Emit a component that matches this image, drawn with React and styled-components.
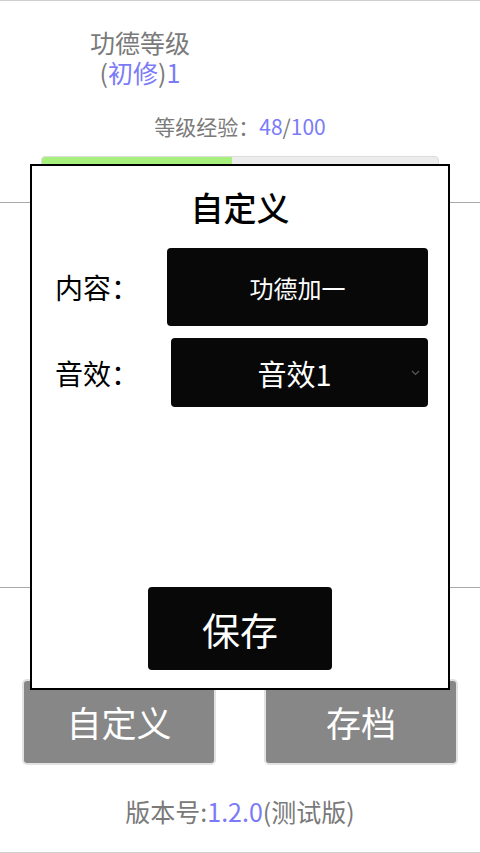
import React from "react";
import styled, { createGlobalStyle } from "styled-components";

const Global = createGlobalStyle`
  html, body { margin: 0; padding: 0; background: #fff; }
  body { font-family: "Noto Sans CJK SC", "Noto Sans", sans-serif; }
  * { box-sizing: border-box; }
`;

const Page = styled.div`
  position: relative;
  width: 480px;
  height: 853px;
  border-top: 1px solid #cfcfcf;
  border-bottom: 1px solid #cfcfcf;
  display: flex;
  flex-direction: column;
  overflow: hidden;
`;

const LevelBlock = styled.div`
  width: 280px;
  padding-top: 26px;
  text-align: center;
  font-size: 25px;
  line-height: 30px;
  color: #7a7a7a;
`;

const Blue = styled.span`
  color: #7b7bf7;
`;

const ExpLine = styled.div`
  margin-top: 27px;
  text-align: center;
  font-size: 21px;
  line-height: 24px;
  color: #7a7a7a;
`;

const Bar = styled.div`
  margin: 18px 41px 0;
  height: 20px;
  border: 1px solid #dcdcdc;
  border-radius: 4px;
  background: #ececec;
  overflow: hidden;
`;

const BarFill = styled.div`
  height: 100%;
  background: #a8f07e;
`;

const Stage = styled.div`
  margin-top: 26px;
  height: 386px;
  border-top: 1px solid #a9a9a9;
  border-bottom: 1px solid #a9a9a9;
`;

const ButtonRow = styled.div`
  margin-top: 91px;
  padding: 0 22px;
  display: flex;
  justify-content: space-between;
`;

const GrayButton = styled.div`
  width: 194px;
  height: 86px;
  background: #878787;
  border: 2px solid #e2e2e2;
  border-radius: 5px;
  color: #fff;
  font-size: 35px;
  line-height: 1;
  display: flex;
  align-items: center;
  justify-content: center;
  padding-bottom: 2px;
`;

const Version = styled.div`
  margin-top: 30px;
  text-align: center;
  font-size: 25px;
  line-height: 32px;
  color: #7a7a7a;
`;

const Modal = styled.div`
  position: absolute;
  left: 30px;
  top: 163px;
  width: 420px;
  height: 526px;
  background: #fff;
  border: 2px solid #000;
  display: flex;
  flex-direction: column;
`;

const ModalTitle = styled.div`
  margin-top: 21px;
  text-align: center;
  font-size: 33px;
  line-height: 40px;
  font-weight: 500;
  color: #000;
`;

const FieldRow = styled.div`
  display: flex;
  align-items: center;
  margin-top: ${(p) => p.$gap}px;
  padding: 0 20px 0 23px;
`;

const Label = styled.div`
  width: 112px;
  flex: none;
  font-size: 28px;
  color: #000;
`;

const Field = styled.div`
  position: relative;
  flex: 1;
  height: ${(p) => p.$h}px;
  margin-left: ${(p) => p.$offset || 0}px;
  background: #080808;
  border-radius: 4px;
  color: #fff;
  font-size: ${(p) => p.$size}px;
  display: flex;
  align-items: center;
  justify-content: center;
  padding-right: ${(p) => p.$pr || 0}px;
`;

const Chevron = styled.svg`
  position: absolute;
  right: 8px;
  top: 50%;
  margin-top: -3px;
`;

const Spacer = styled.div`
  flex: 1;
`;

const SaveButton = styled.div`
  align-self: center;
  margin-bottom: 18px;
  width: 184px;
  height: 83px;
  background: #080808;
  border-radius: 4px;
  color: #fff;
  font-size: 38px;
  display: flex;
  align-items: center;
  justify-content: center;
`;

export default function App() {
  const exp = 48;
  const max = 100;
  return (
    <>
      <Global />
      <Page>
        <LevelBlock>
          <div>功德等级</div>
          <div>
            (<Blue>初修</Blue>)<Blue>1</Blue>
          </div>
        </LevelBlock>
        <ExpLine>
          等级经验：<Blue>{exp}</Blue>/<Blue>{max}</Blue>
        </ExpLine>
        <Bar>
          <BarFill style={{ width: `${(exp / max) * 100}%` }} />
        </Bar>
        <Stage />
        <ButtonRow>
          <GrayButton>自定义</GrayButton>
          <GrayButton>存档</GrayButton>
        </ButtonRow>
        <Version>
          版本号:<Blue>1.2.0</Blue>(测试版)
        </Version>

        <Modal>
          <ModalTitle>自定义</ModalTitle>
          <FieldRow $gap={21}>
            <Label>内容：</Label>
            <Field $h={78} $size={24}>功德加一</Field>
          </FieldRow>
          <FieldRow $gap={12}>
            <Label>音效：</Label>
            <Field $h={69} $size={29} $offset={4} $pr={10}>
              音效1
              <Chevron width="9" height="6" viewBox="0 0 9 6">
                <path d="M1 1 L4.5 4.5 L8 1" fill="none" stroke="#5a5a5a" strokeWidth="1.2" />
              </Chevron>
            </Field>
          </FieldRow>
          <Spacer />
          <SaveButton>保存</SaveButton>
        </Modal>
      </Page>
    </>
  );
}
